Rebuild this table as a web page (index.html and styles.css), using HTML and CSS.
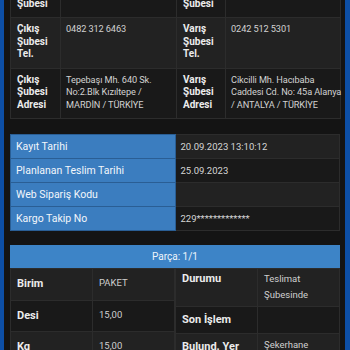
FILE: index.html
```html
<!DOCTYPE html>
<html lang="tr">
<head>
<meta charset="utf-8">
<link rel="stylesheet" href="styles.css">
</head>
<body>
<div class="page">
  <table class="branch">
    <colgroup><col class="c1"><col class="c2"><col class="c3"><col class="c4"></colgroup>
    <tr class="row-dark">
      <th>Çıkış<br>Şubesi</th><td>KIZILTEPE</td>
      <th>Varış<br>Şubesi</th><td>ALANYA</td>
    </tr>
    <tr class="row-light">
      <th>Çıkış<br>Şubesi<br>Tel.</th><td>0482 312 6463</td>
      <th>Varış<br>Şubesi<br>Tel.</th><td>0242 512 5301</td>
    </tr>
    <tr class="row-dark">
      <th>Çıkış<br>Şubesi<br>Adresi</th><td class="addr">Tepebaşı Mh. 640 Sk.<br>No:2.Blk Kızıltepe /<br>MARDİN / TÜRKİYE</td>
      <th>Varış<br>Şubesi<br>Adresi</th><td class="addr">Cikcilli Mh. Hacıbaba<br>Caddesi Cd. No: 45a Alanya<br>/ ANTALYA / TÜRKİYE</td>
    </tr>
  </table>

  <table class="info">
    <tr class="row-light"><th>Kayıt Tarihi</th><td>20.09.2023 13:10:12</td></tr>
    <tr class="row-dark"><th>Planlanan Teslim Tarihi</th><td>25.09.2023</td></tr>
    <tr class="row-light"><th>Web Sipariş Kodu</th><td></td></tr>
    <tr class="row-dark"><th>Kargo Takip No</th><td>229*************</td></tr>
  </table>

  <div class="parts">
    <div class="parts-head">Parça: 1/1</div>
    <div class="parts-body">
      <table class="part left">
        <tr class="row-light r30"><th>Birim</th><td>PAKET</td></tr>
        <tr class="row-dark r30"><th>Desi</th><td>15,00</td></tr>
        <tr class="row-light r30"><th>Kg</th><td>15,00</td></tr>
      </table>
      <table class="part right">
        <tr class="row-light r38"><th>Durumu</th><td>Teslimat<br>Şubesinde</td></tr>
        <tr class="row-dark r27"><th>Son İşlem</th><td></td></tr>
        <tr class="row-light r30"><th>Bulund. Yer</th><td>Şekerhane</td></tr>
      </table>
    </div>
  </div>
</div>
</body>
</html>
```

FILE: styles.css
```css
html, body {
  margin: 0;
  padding: 0;
  height: 100%;
  overflow: hidden;
}
body {
  background: #0d4fa6;
  font-family: Roboto, "Liberation Sans", sans-serif;
  color: #e6e6e6;
}
.page {
  margin: 0 5px 0 4px;
  padding: 0 5px 0 6px;
  background: #141414;
  height: 100%;
  overflow: hidden;
}
table {
  border-collapse: collapse;
  table-layout: fixed;
  width: 330px;
}
th, td {
  text-align: left;
  vertical-align: top;
}
.row-light { background: #222222; }
.row-dark { background: #191919; }

/* branch table */
.branch {
  margin-top: -21px;
}
.branch .c1 { width: 50px; }
.branch .c2 { width: 116px; }
.branch .c3 { width: 49px; }
.branch .c4 { width: 115px; }
.branch th, .branch td {
  border: 1px solid #2c2c2c;
  padding: 5px 1px 7px 6px;
  font-size: 10px;
  line-height: 12.5px;
}
.branch th {
  font-weight: 700;
  color: #ececec;
}
.branch td {
  color: #d2d2d2;
  font-size: 9.2px;
  letter-spacing: -0.1px;
  padding-left: 5px;
  padding-right: 0;
}
.branch .addr {
  white-space: nowrap;
}

/* info table */
.info {
  margin-top: 15px;
}
.info th, .info td {
  height: 24px;
  padding: 0 5px;
  vertical-align: middle;
  font-size: 10.5px;
  border: 1px solid #2c2c2c;
  box-sizing: border-box;
}
.info th {
  background: #3b7dbf;
  font-weight: 400;
  color: #f2f6fb;
  border-color: #2a5e94;
}
.info td {
  color: #d6d6d6;
  font-size: 9.5px;
}

/* parts */
.parts {
  margin-top: 14px;
}
.parts-head {
  background: #3d84c7;
  color: #eef4fb;
  font-size: 10px;
  height: 23px;
  line-height: 23px;
  text-align: center;
}
.parts-body {
  display: flex;
}
.part {
  width: 165px;
}
.part th, .part td {
  border: 1px solid #2c2c2c;
  font-size: 10px;
  box-sizing: border-box;
}
.part th {
  width: 82px;
  font-weight: 700;
  font-size: 11px;
  color: #ececec;
  padding: 8px 5px 0 6px;
}
.part td {
  color: #cfcfcf;
  font-size: 9.5px;
  padding: 6px 5px 0 6px;
  line-height: 16px;
}
.r30 { height: 30px; }
.r38 { height: 38px; }
.r27 { height: 27px; }
.right .r38 th { padding-top: 3px; }
.right .r38 td { padding-top: 2px; }
.right .r27 th { padding-top: 6px; }
.right .r30 th { padding-top: 6px; }
.right .r30 td { padding-top: 3px; }
```
